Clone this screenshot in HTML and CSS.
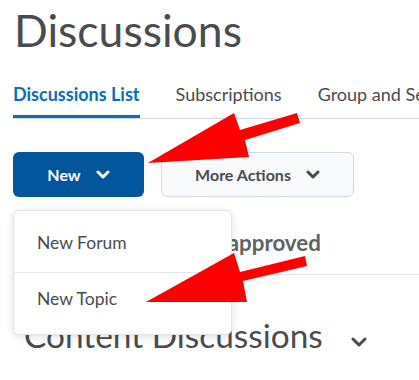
FILE: index.html
```html
<!DOCTYPE html>
<html lang="en">
<head>
    <meta charset="UTF-8">
    <meta name="viewport" content="width=device-width, initial-scale=1.0">
    <title>Discussions</title>
    <link rel="stylesheet" href="styles.css">
</head>
<body>
    <div class="page">
        <h1 class="title">Discussions</h1>

        <nav class="tabs">
            <a class="tab active">Discussions List</a>
            <a class="tab">Subscriptions</a>
            <a class="tab">Group and Se</a>
        </nav>

        <div class="actions">
            <div class="menu-wrap">
                <button class="btn btn-primary">
                    New
                    <svg class="chev" viewBox="0 0 14 9"><path d="M2 2l5 5 5-5"/></svg>
                </button>
                <!-- Open dropdown -->
                <ul class="dropdown">
                    <li>New Forum</li>
                    <li>New Topic</li>
                </ul>
            </div>
            <button class="btn btn-secondary">
                More Actions
                <svg class="chev" viewBox="0 0 14 9"><path d="M2 2l5 5 5-5"/></svg>
            </button>
        </div>

        <div class="section-row">
            <span class="section-label">Unapproved</span>
        </div>

        <div class="category">
            <h2>Content Discussions</h2>
            <svg class="chev chev-lg" viewBox="0 0 16 10"><path d="M2 2l6 6 6-6"/></svg>
        </div>
    </div>

    <!-- Annotation arrows -->
    <svg class="arrows" viewBox="0 0 419 380">
        <polygon points="148,163 249,157 245,140 300,123 297,113 240,130 234,113"/>
        <polygon points="146,302 247,302 243,281 307,266 305,256 240,272 234,253"/>
    </svg>
</body>
</html>
```

FILE: styles.css
```css
body {
    font-family: 'Lato', 'Open Sans', sans-serif;
    color: #494c4e;
    background-color: #fff;
    margin: 0;
    padding: 0;
    width: 419px;
    height: 380px;
    overflow: hidden;
    position: relative;
}

.page {
    padding-left: 13px;
}

.title {
    font-size: 44.5px;
    font-weight: 400;
    line-height: 54px;
    margin: 0;
    padding-top: 3px;
    padding-left: 1px;
}

.tabs {
    display: flex;
    gap: 36px;
    margin-top: 26px;
    border-bottom: 1px solid #d3d9e3;
    white-space: nowrap;
    overflow: hidden;
}

.tab {
    font-size: 18px;
    line-height: 22px;
    padding-bottom: 10px;
    border-bottom: 3px solid transparent;
    flex-shrink: 0;
}

.tab.active {
    color: #0b6dba;
    font-weight: 700;
    border-bottom-color: #0b6dba;
}

.actions {
    display: flex;
    gap: 17px;
    margin-top: 33px;
}

.menu-wrap {
    position: relative;
}

.btn {
    display: flex;
    align-items: center;
    justify-content: center;
    gap: 15px;
    height: 45px;
    border-radius: 6px;
    font-family: inherit;
    font-size: 16px;
    font-weight: 700;
    padding: 0;
}

.btn-primary {
    width: 131px;
    background-color: #03569b;
    border: none;
    color: #fff;
}

.btn-secondary {
    width: 193px;
    background-color: #f9fafc;
    border: 1px solid #d3d9e3;
    color: #494c4e;
}

.chev {
    width: 14px;
    height: 9px;
    fill: none;
    stroke: currentColor;
    stroke-width: 3;
    stroke-linecap: round;
    stroke-linejoin: round;
}

.dropdown {
    position: absolute;
    top: 58px;
    left: 0;
    width: 217px;
    margin: 0;
    padding: 0;
    list-style: none;
    background-color: #fff;
    border: 1px solid #e0e5ec;
    border-radius: 6px;
    box-shadow: 0 2px 8px rgba(0,0,0,0.12);
    z-index: 2;
}

.dropdown li {
    font-size: 17.5px;
    padding: 0 23px;
    height: 61px;
    line-height: 64px;
}

.dropdown li + li {
    border-top: 1px solid #e3e7ed;
    line-height: 52px;
}

.section-row {
    height: 78px;
    border-bottom: 1px solid #e3e7ed;
    padding-left: 186px;
    box-sizing: border-box;
    padding-top: 32px;
}

.section-label {
    font-size: 22.3px;
    font-weight: 700;
    color: #5f6264;
}

.category {
    display: flex;
    align-items: center;
    gap: 28px;
    padding-left: 11px;
    margin-top: 40px;
}

.category h2 {
    font-size: 33.4px;
    font-weight: 400;
    line-height: 40px;
    margin: 0;
}

.chev-lg {
    width: 16px;
    height: 10px;
    margin-top: 14px;
}

.arrows {
    position: absolute;
    top: 0;
    left: 0;
    width: 419px;
    height: 380px;
    fill: #fe0000;
    z-index: 3;
}
```
